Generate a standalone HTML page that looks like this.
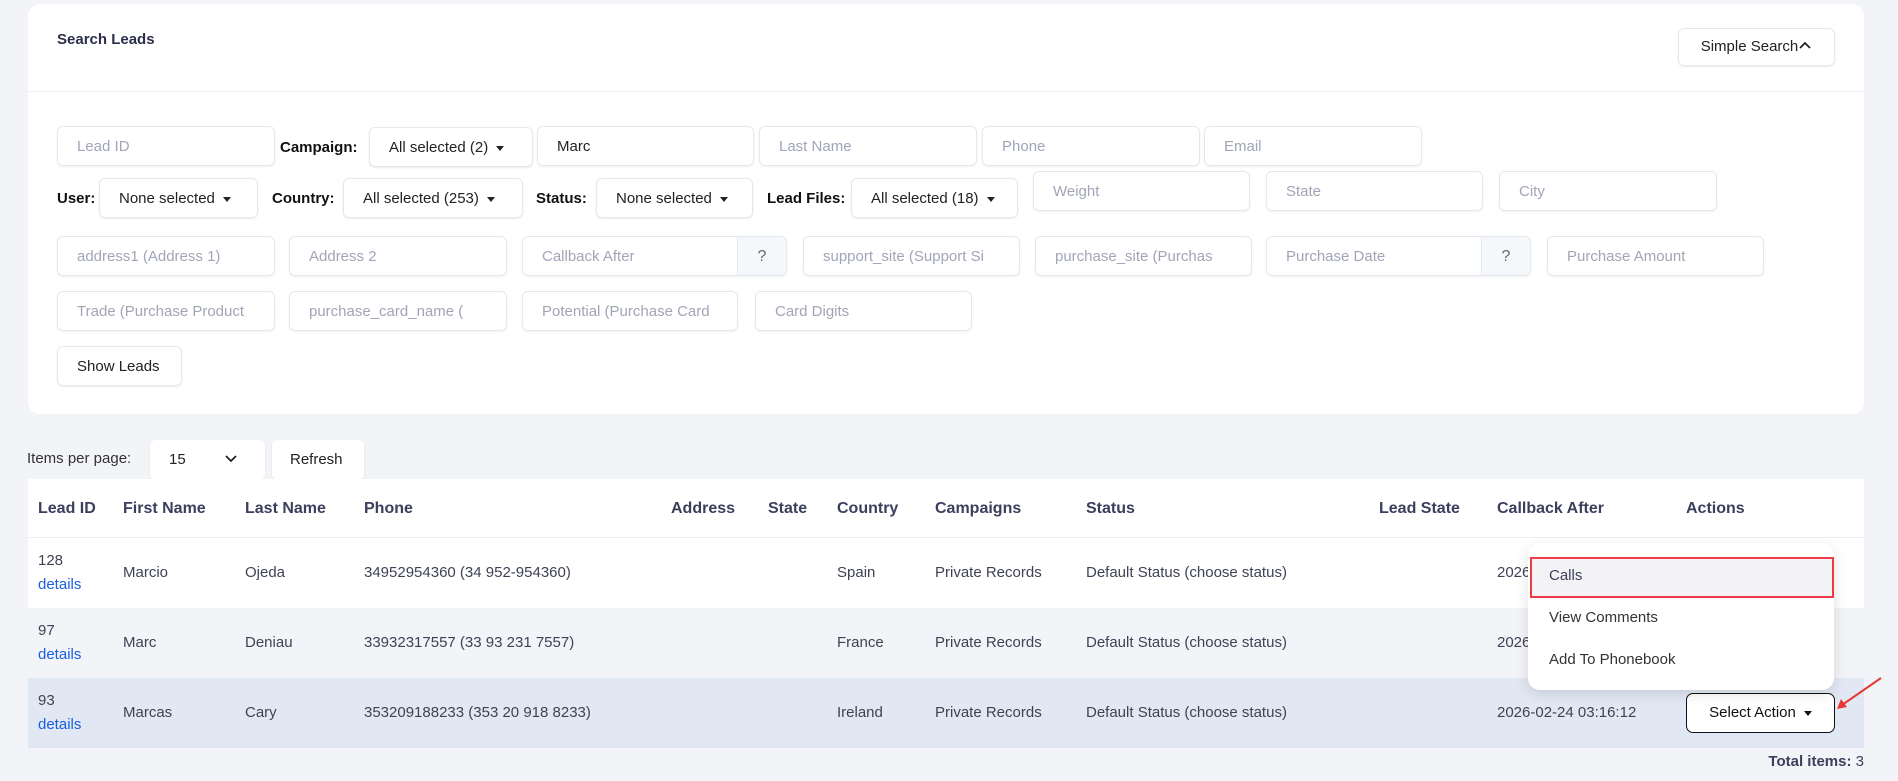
<!DOCTYPE html>
<html><head><meta charset="utf-8"><style>
*{box-sizing:border-box;margin:0;padding:0}
body{width:1898px;height:781px;background:#f3f4f8;font-family:"Liberation Sans",sans-serif;position:relative;overflow:hidden;color:#3f4254}
.a{position:absolute}
.card{left:28px;top:4px;width:1836px;height:410px;background:#fff;border-radius:12px}
.inp{position:absolute;height:40px;border:1px solid #e6e8ef;border-radius:6px;background:#fff;box-shadow:0 1px 2px rgba(0,0,0,.06);color:#a1a5b7;font-size:15px;line-height:40px;padding-left:19px;white-space:nowrap;overflow:hidden}
.sel{position:absolute;height:40px;border:1px solid #e6e8ef;border-radius:6px;background:#fff;box-shadow:0 1px 2px rgba(0,0,0,.08);color:#222;font-size:15px;line-height:39px;padding-left:19px;white-space:nowrap}
.car{display:inline-block;width:0;height:0;border-left:4px solid transparent;border-right:4px solid transparent;border-top:5px solid #222;vertical-align:middle;margin-left:8px}
.lbl{position:absolute;font-weight:bold;font-size:15px;color:#111}
.add{position:absolute;right:0;top:0;width:49px;height:38px;background:#f5f8fa;border-left:1px solid #e6e8ef;text-align:center;color:#666;font-size:16px}
.th{position:absolute;top:500px;font-weight:bold;font-size:16px;color:#3b3f5c}
.td{position:absolute;font-size:15px;color:#3f4254;white-space:nowrap}
.lnk{color:#1a5fe0}
</style></head><body>
<div class="a card"></div>
<div class="a" style="left:57px;top:31px;font-weight:bold;font-size:15px;color:#2b2f4c">Search Leads</div>
<div class="a" style="left:1678px;top:28px;width:157px;height:38px;border:1px solid #e6e8ef;border-radius:6px;box-shadow:0 1px 2px rgba(0,0,0,.08);font-size:15px;line-height:36px;text-align:center;color:#222">Simple Search<svg width="14" height="10" viewBox="0 0 14 10" style="vertical-align:1px"><path d="M2 8 L7 3 L12 8" stroke="#222" stroke-width="1.8" fill="none"/></svg></div>
<div class="a" style="left:28px;top:91px;width:1836px;height:1px;background:#eef0f4"></div>

<div class="inp" style="left:57px;top:126px;width:218px">Lead ID</div>
<div class="lbl" style="left:280px;top:139px">Campaign:</div>
<div class="sel" style="left:369px;top:127px;width:164px">All selected (2)<span class="car"></span></div>
<div class="inp" style="left:537px;top:126px;width:217px;color:#222">Marc</div>
<div class="inp" style="left:759px;top:126px;width:218px">Last Name</div>
<div class="inp" style="left:982px;top:126px;width:218px">Phone</div>
<div class="inp" style="left:1204px;top:126px;width:218px">Email</div>

<div class="lbl" style="left:57px;top:190px">User:</div>
<div class="sel" style="left:99px;top:178px;width:159px">None selected<span class="car"></span></div>
<div class="lbl" style="left:272px;top:190px">Country:</div>
<div class="sel" style="left:343px;top:178px;width:180px">All selected (253)<span class="car"></span></div>
<div class="lbl" style="left:536px;top:190px">Status:</div>
<div class="sel" style="left:596px;top:178px;width:157px">None selected<span class="car"></span></div>
<div class="lbl" style="left:767px;top:190px">Lead Files:</div>
<div class="sel" style="left:851px;top:178px;width:167px">All selected (18)<span class="car"></span></div>
<div class="inp" style="left:1033px;top:171px;width:217px">Weight</div>
<div class="inp" style="left:1266px;top:171px;width:217px">State</div>
<div class="inp" style="left:1499px;top:171px;width:218px">City</div>

<div class="inp" style="left:57px;top:236px;width:218px">address1 (Address 1)</div>
<div class="inp" style="left:289px;top:236px;width:218px">Address 2</div>
<div class="inp" style="left:522px;top:236px;width:265px">Callback After<div class="add">?</div></div>
<div class="inp" style="left:803px;top:236px;width:217px">support_site (Support Si</div>
<div class="inp" style="left:1035px;top:236px;width:217px">purchase_site (Purchas</div>
<div class="inp" style="left:1266px;top:236px;width:265px">Purchase Date<div class="add">?</div></div>
<div class="inp" style="left:1547px;top:236px;width:217px">Purchase Amount</div>

<div class="inp" style="left:57px;top:291px;width:218px">Trade (Purchase Product</div>
<div class="inp" style="left:289px;top:291px;width:218px">purchase_card_name (</div>
<div class="inp" style="left:522px;top:291px;width:216px">Potential (Purchase Card</div>
<div class="inp" style="left:755px;top:291px;width:217px">Card Digits</div>
<div class="sel" style="left:57px;top:346px;width:125px;padding-left:19px">Show Leads</div>

<div class="a" style="left:27px;top:450px;font-size:15px;color:#333">Items per page:</div>
<div class="sel" style="left:150px;top:440px;width:115px;border:none">15<svg class="a" style="left:74px;top:14px" width="14" height="10" viewBox="0 0 14 10"><path d="M2 2 L7 7 L12 2" stroke="#222" stroke-width="1.8" fill="none"/></svg></div>
<div class="sel" style="left:272px;top:440px;width:92px;border:none;padding-left:18px">Refresh</div>

<div class="a" style="left:28px;top:479px;width:1836px;height:59px;background:#fff"></div>
<div class="a" style="left:28px;top:537px;width:1836px;height:1px;background:#eceef3"></div>
<div class="a" style="left:28px;top:538px;width:1836px;height:70px;background:#fff"></div>
<div class="a" style="left:28px;top:608px;width:1836px;height:70px;background:#f3f4f8"></div>
<div class="a" style="left:28px;top:678px;width:1836px;height:70px;background:#e1e8f3"></div>

<div class="th" style="left:38px">Lead ID</div>
<div class="th" style="left:123px">First Name</div>
<div class="th" style="left:245px">Last Name</div>
<div class="th" style="left:364px">Phone</div>
<div class="th" style="left:671px">Address</div>
<div class="th" style="left:768px">State</div>
<div class="th" style="left:837px">Country</div>
<div class="th" style="left:935px">Campaigns</div>
<div class="th" style="left:1086px">Status</div>
<div class="th" style="left:1379px">Lead State</div>
<div class="th" style="left:1497px">Callback After</div>
<div class="th" style="left:1686px">Actions</div>

<div class="td" style="left:38px;top:552px">128</div><div class="td lnk" style="left:38px;top:576px">details</div>
<div class="td" style="left:123px;top:564px">Marcio</div><div class="td" style="left:245px;top:564px">Ojeda</div>
<div class="td" style="left:364px;top:564px">34952954360 (34 952-954360)</div>
<div class="td" style="left:837px;top:564px">Spain</div><div class="td" style="left:935px;top:564px">Private Records</div>
<div class="td" style="left:1086px;top:564px">Default Status (choose status)</div><div class="td" style="left:1497px;top:564px">2026</div>

<div class="td" style="left:38px;top:622px">97</div><div class="td lnk" style="left:38px;top:646px">details</div>
<div class="td" style="left:123px;top:634px">Marc</div><div class="td" style="left:245px;top:634px">Deniau</div>
<div class="td" style="left:364px;top:634px">33932317557 (33 93 231 7557)</div>
<div class="td" style="left:837px;top:634px">France</div><div class="td" style="left:935px;top:634px">Private Records</div>
<div class="td" style="left:1086px;top:634px">Default Status (choose status)</div><div class="td" style="left:1497px;top:634px">2026</div>

<div class="td" style="left:38px;top:692px">93</div><div class="td lnk" style="left:38px;top:716px">details</div>
<div class="td" style="left:123px;top:704px">Marcas</div><div class="td" style="left:245px;top:704px">Cary</div>
<div class="td" style="left:364px;top:704px">353209188233 (353 20 918 8233)</div>
<div class="td" style="left:837px;top:704px">Ireland</div><div class="td" style="left:935px;top:704px">Private Records</div>
<div class="td" style="left:1086px;top:704px">Default Status (choose status)</div><div class="td" style="left:1497px;top:704px">2026-02-24 03:16:12</div>

<div class="a" style="left:1686px;top:693px;width:149px;height:40px;border:1.5px solid #111;border-radius:7px;background:#fff;font-size:15px;line-height:37px;text-align:center;color:#111">Select Action<span class="car" style="border-top-color:#111"></span></div>

<div class="a" style="left:1528px;top:543px;width:306px;height:147px;background:#fff;border-radius:12px;box-shadow:0 4px 14px rgba(0,0,0,.12)"></div>
<div class="a" style="left:1530px;top:557px;width:304px;height:41px;background:#f3f3f5;border:2.5px solid #ef3b45"></div>
<div class="td" style="left:1549px;top:567px;color:#3b3f5c">Calls</div>
<div class="td" style="left:1549px;top:609px;color:#333">View Comments</div>
<div class="td" style="left:1549px;top:651px;color:#333">Add To Phonebook</div>

<svg class="a" style="left:1830px;top:672px" width="60" height="45" viewBox="0 0 60 45"><path d="M51 6 L12 33" stroke="#e53935" stroke-width="2"/><path d="M7 37 L11 27 L17 35 Z" fill="#e53935"/></svg>

<div class="a" style="left:1720px;top:753px;font-size:15px;color:#3b3f5c;width:144px;text-align:right"><b>Total items:</b> 3</div>
</body></html>
